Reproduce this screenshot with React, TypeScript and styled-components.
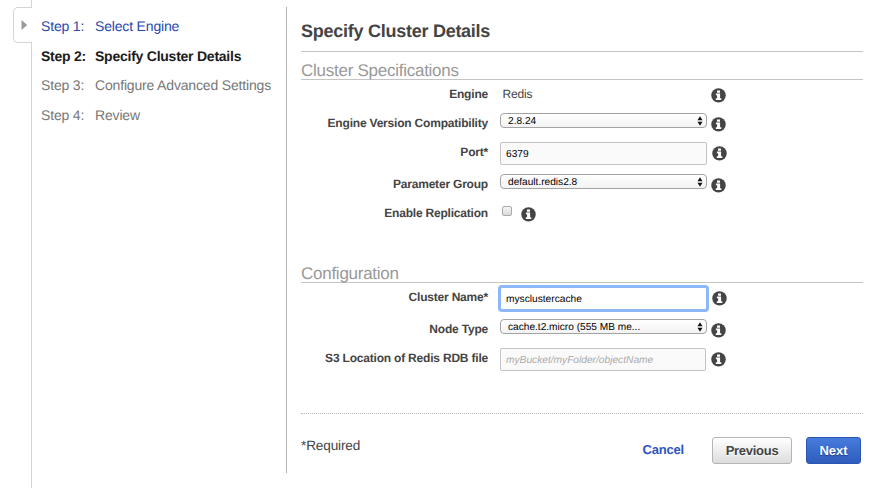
import React from "react";
import styled, { createGlobalStyle, css } from "styled-components";

const GlobalStyle = createGlobalStyle`
  * { box-sizing: border-box; }
  body {
    margin: 0;
    background: #fff;
    color: #444;
    font-family: "Liberation Sans", Arial, sans-serif;
    text-rendering: geometricPrecision;
    overflow: hidden;
  }
`;

const Page = styled.div`
  display: flex;
  width: 888px;
  height: 488px;
`;

const Gutter = styled.div`
  flex: none;
  display: flex;
  flex-direction: column;
  align-items: flex-end;
  width: 32px;
`;

const GutterLine = styled.div<{ $grow?: boolean }>`
  width: 1px;
  height: 7px;
  background: #d5d5d5;
  ${(p) => p.$grow && css`flex: 1;`}
`;

const ExpandTab = styled.button`
  display: flex;
  align-items: center;
  width: 19px;
  height: 36px;
  padding: 0 0 0 7px;
  border: 1px solid #d5d5d5;
  border-right: 0;
  border-radius: 5px 0 0 5px;
  background: #fff;
`;

const Steps = styled.ol`
  flex: none;
  width: 254px;
  margin: 0;
  padding: 12px 0 0 9px;
  list-style: none;
`;

type StepState = "done" | "current" | "todo";
const stepColors: Record<StepState, string> = {
  done: "#2a48ab",
  current: "#1c1c1c",
  todo: "#777",
};

const Step = styled.li<{ $state: StepState }>`
  display: flex;
  height: 29.6px;
  line-height: 29px;
  font-size: 14px;
  letter-spacing: -0.17px;
  white-space: nowrap;
  color: ${(p) => stepColors[p.$state]};
  ${(p) => p.$state === "current" && css`font-weight: bold; letter-spacing: -0.24px;`}
`;

const StepNumber = styled.span`
  flex: none;
  width: 54px;
`;

const Main = styled.main`
  width: 577px;
  height: 466px;
  margin-top: 7px;
  padding-left: 14px;
  border-left: 1px solid #b5b5b5;
`;

const Title = styled.h1`
  height: 45px;
  margin: 0;
  border-bottom: 1px solid #c4c4c4;
  font-size: 18px;
  letter-spacing: -0.26px;
  line-height: 48px;
`;

const Section = styled.section<{ $gap: number }>`
  padding-top: ${(p) => p.$gap}px;
`;

const SectionTitle = styled.h2`
  height: 20px;
  margin: 0;
  border-bottom: 1px solid #c4c4c4;
  color: #999;
  font-size: 17px;
  font-weight: normal;
  letter-spacing: -0.26px;
  line-height: 22px;
`;

const Row = styled.div<{ $tall?: boolean }>`
  display: grid;
  grid-template-columns: 187px auto auto;
  justify-content: start;
  align-items: start;
  column-gap: 0;
  height: ${(p) => (p.$tall ? 32 : 29)}px;
`;

const Label = styled.label`
  padding-top: 6px;
  font-size: 12px;
  font-weight: bold;
  letter-spacing: -0.2px;
  line-height: 16px;
  text-align: right;
  white-space: nowrap;
`;

const StaticValue = styled.span`
  width: 206px;
  margin-left: 12px;
  padding: 6px 0 0 2.5px;
  font-size: 12px;
  letter-spacing: -0.15px;
  line-height: 16px;
`;

const Select = styled.div`
  display: flex;
  justify-content: space-between;
  align-items: center;
  width: 207px;
  height: 15px;
  margin: 4px 0 0 12px;
  padding: 0 3px 0 7px;
  border: 1px solid #a3a3a3;
  border-radius: 4px;
  background: linear-gradient(#fff, #f3f3f3);
  color: #000;
  font-size: 10.15px;
  line-height: 13px;
`;

const SelectValue = styled.span`
  padding-top: 1px;
`;

const TextInput = styled.input<{ $focused?: boolean; $width?: number }>`
  width: ${(p) => p.$width ?? 207}px;
  height: 23px;
  margin: 4px 0 0 12px;
  padding: 2px 5px 0;
  border: 1px solid #c3c3c3;
  border-radius: 2px;
  outline: 0;
  background: #fafafa;
  color: #000;
  font: 10.2px "Liberation Sans", Arial, sans-serif;
  text-rendering: geometricPrecision;
  ${(p) =>
    p.$focused &&
    css`
      border-color: #8fb7f3;
      background: #fff;
      box-shadow: 0 0 0 2px #8cb8fb;
    `}
  &::placeholder {
    color: #aaa;
    font-style: italic;
    opacity: 1;
  }
`;

const Checkbox = styled.span`
  width: 10px;
  height: 10px;
  margin: 7px 0 0 14px;
  border: 1px solid #aaa;
  border-radius: 2px;
  background: linear-gradient(#f6f6f6, #d9d9d9);
`;

const InfoSvg = styled.svg<{ $gap: number }>`
  display: block;
  margin: 8px 0 0 ${(p) => p.$gap}px;
`;

const Footer = styled.footer`
  display: flex;
  align-items: flex-start;
  width: 562px;
  margin-top: 40px;
  padding: 23px 2px 0 0;
  border-top: 1px dotted #b8b8b8;
`;

const Required = styled.span`
  flex: 1;
  font-size: 13.6px;
  letter-spacing: -0.15px;
  line-height: 18px;
`;

const Cancel = styled.a`
  margin-right: 28px;
  color: #3055bd;
  font-size: 13px;
  font-weight: bold;
  letter-spacing: -0.18px;
  line-height: 26px;
`;

const Button = styled.button<{ $primary?: boolean }>`
  width: ${(p) => (p.$primary ? 55 : 80)}px;
  height: 27px;
  padding: 0;
  border: 1px solid ${(p) => (p.$primary ? "#2a55b0" : "#b5b5b5")};
  border-radius: 3px;
  background: ${(p) =>
    p.$primary ? "linear-gradient(#467bdc, #2f5dbd)" : "linear-gradient(#fff, #ddd)"};
  color: ${(p) => (p.$primary ? "#fff" : "#444")};
  font: bold 13px "Liberation Sans", Arial, sans-serif;
  letter-spacing: ${(p) => (p.$primary ? -0.05 : -0.28)}px;
  text-rendering: geometricPrecision;
  text-shadow: ${(p) => (p.$primary ? "0 1px 1px #1b3c80" : "0 1px 0 #fff")};
  & + & {
    margin-left: 14px;
  }
`;

const Info = ({ gap = 4 }: { gap?: number }) => (
  <InfoSvg $gap={gap} width="15" height="15" viewBox="0 0 15 15" aria-hidden="true">
    <circle cx="7.5" cy="7.4" r="7.2" fill="#444" />
    <path d="M6 2.4h3v2.3H6zM4.9 5.6h4.2v4.6h1.2v1.8H4.8v-1.8h1.3V7.3H4.9z" fill="#fff" />
  </InfoSvg>
);

const Dropdown = ({ value }: { value: string }) => (
  <Select role="combobox">
    <SelectValue>{value}</SelectValue>
    <svg width="6" height="10" viewBox="0 0 6 10" aria-hidden="true">
      <path d="M3 0.3L5.5 4.2H0.5zM3 9.7L0.5 5.8H5.5z" fill="#111" />
    </svg>
  </Select>
);

const steps: { name: string; state: StepState }[] = [
  { name: "Select Engine", state: "done" },
  { name: "Specify Cluster Details", state: "current" },
  { name: "Configure Advanced Settings", state: "todo" },
  { name: "Review", state: "todo" },
];

export default function App() {
  return (
    <>
      <GlobalStyle />
      <Page>
        <Gutter>
          <GutterLine />
          <ExpandTab aria-label="Expand">
            <svg width="7" height="10" viewBox="0 0 7 10">
              <path d="M0.5 0L6.2 5L0.5 10z" fill="#999" />
            </svg>
          </ExpandTab>
          <GutterLine $grow />
        </Gutter>
        <Steps>
          {steps.map((s, i) => (
            <Step key={s.name} $state={s.state}>
              <StepNumber>Step {i + 1}:</StepNumber>
              <span>{s.name}</span>
            </Step>
          ))}
        </Steps>
        <Main>
          <Title>Specify Cluster Details</Title>
          <Section $gap={8}>
            <SectionTitle>Cluster Specifications</SectionTitle>
            <Row>
              <Label>Engine</Label>
              <StaticValue>Redis</StaticValue>
              <Info gap={5} />
            </Row>
            <Row>
              <Label>Engine Version Compatibility</Label>
              <Dropdown value="2.8.24" />
              <Info />
            </Row>
            <Row $tall>
              <Label>Port*</Label>
              <TextInput defaultValue="6379" />
              <Info gap={5} />
            </Row>
            <Row>
              <Label>Parameter Group</Label>
              <Dropdown value="default.redis2.8" />
              <Info />
            </Row>
            <Row>
              <Label>Enable Replication</Label>
              <Checkbox role="checkbox" />
              <Info gap={9} />
            </Row>
          </Section>
          <Section $gap={35}>
            <SectionTitle>Configuration</SectionTitle>
            <Row $tall>
              <Label>Cluster Name*</Label>
              <TextInput $focused defaultValue="mysclustercache" />
              <Info gap={5} />
            </Row>
            <Row>
              <Label>Node Type</Label>
              <Dropdown value="cache.t2.micro (555 MB me..." />
              <Info />
            </Row>
            <Row>
              <Label>S3 Location of Redis RDB file</Label>
              <TextInput $width={206} placeholder="myBucket/myFolder/objectName" />
              <Info gap={5} />
            </Row>
          </Section>
          <Footer>
            <Required>*Required</Required>
            <Cancel>Cancel</Cancel>
            <Button>Previous</Button>
            <Button $primary>Next</Button>
          </Footer>
        </Main>
      </Page>
    </>
  );
}
